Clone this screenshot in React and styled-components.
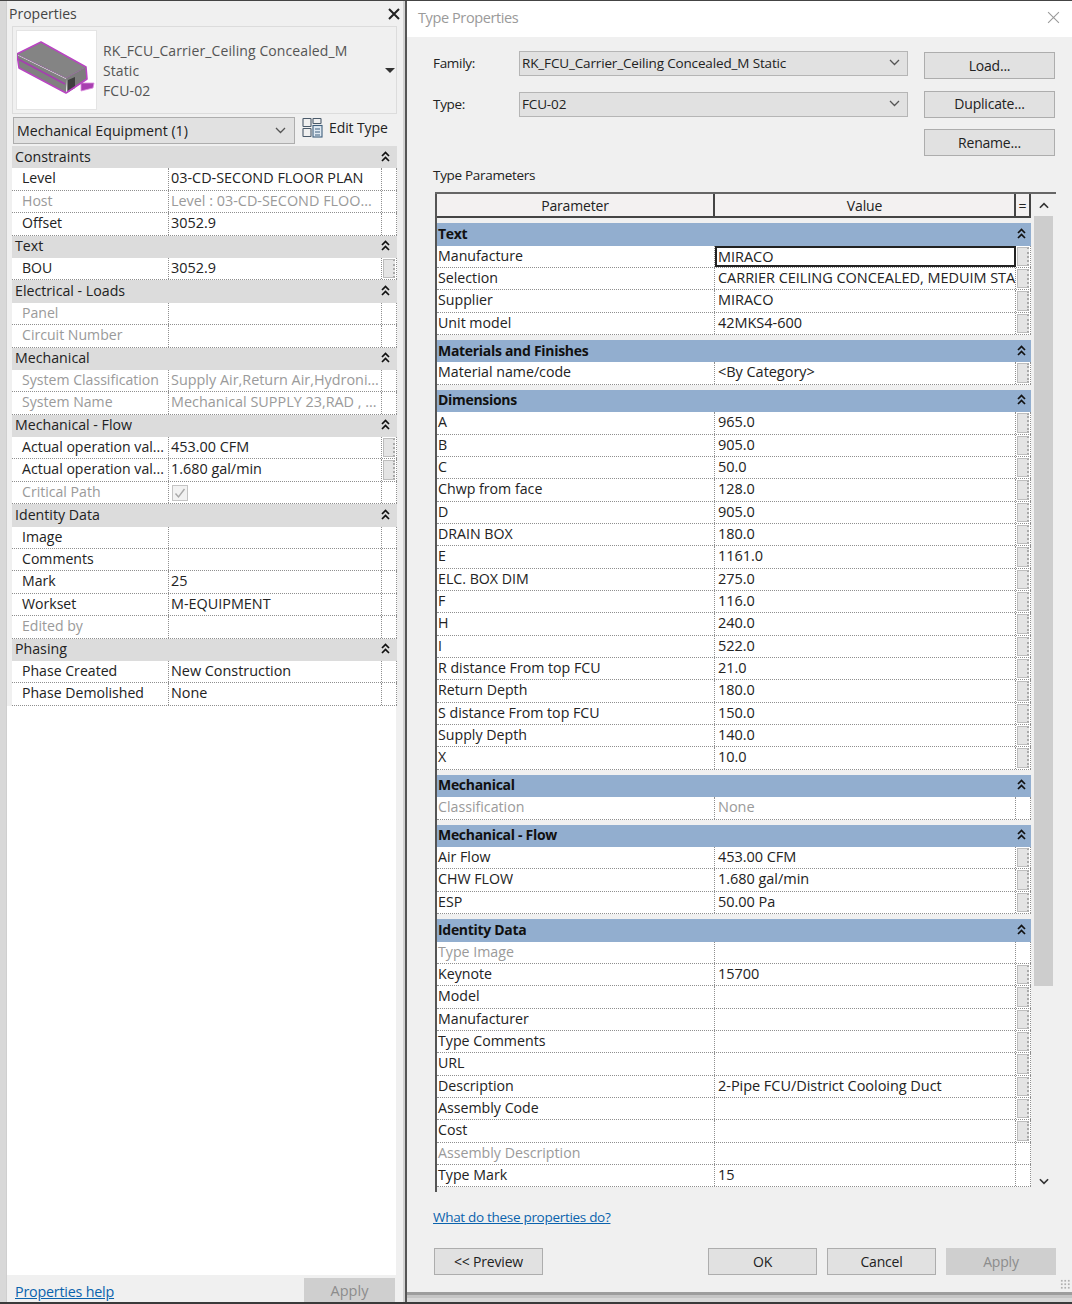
import React from "react";
import styled, { createGlobalStyle } from "styled-components";

const Global = createGlobalStyle`
  html, body { margin: 0; padding: 0; background: #6b6b6b; }
  * { box-sizing: border-box; }
  #root { width: 1072px; height: 1304px; overflow: hidden; }
`;

const Page = styled.div`
  width: 1072px; height: 1304px; display: flex; overflow: hidden;
  font-family: "Open Sans", "Noto Sans", sans-serif; font-size: 14px; color: #222;
  background: #d8d8d8; border-top: 1px solid #444; border-bottom: 2px solid #3a3a3a; position: relative;
`;
const LeftPanel = styled.section`
  width: 397px; margin-left: 6px; height: 100%; flex: none; display: flex; flex-direction: column;
  background: #f0f0f0; border-left: 1px solid #cfcfcf;
`;
const Seam = styled.div`
  width: 4px; flex: none; background: #d2d2d2; border-right: 2px solid #555;
`;
const TitleRow = styled.div`
  height: 25px; flex: none; display: flex; align-items: center; justify-content: space-between;
  padding: 0 3px 0 2px; font-size: 14px; color: #444;
`;
const TypeBox = styled.div`
  height: 88px; margin: 0 0 0 5px; flex: none; display: flex; align-items: center;
  width: 385px; border: 1px solid #dcdcdc; padding-left: 3px;
`;
const Thumb = styled.div`
  width: 81px; height: 80px; background: #fff; flex: none; border: 1px solid #e4e4e4;
  display: flex; align-items: center; justify-content: center;
`;
const TypeText = styled.div`
  flex: 1; padding: 2px 0 0 6px; line-height: 20px; color: #555; font-size: 14px; letter-spacing: 0.1px;
`;
const Caret = styled.div`
  width: 0; height: 0; border: 5px solid transparent; border-top: 5px solid #333; margin: 5px 1px 0 0;
`;
const SelectorRow = styled.div`
  display: flex; align-items: center; height: 32px; flex: none; padding: 0 0 0 6px;
`;
const CategorySelect = styled.div`
  width: 282px; height: 27px; background: #e1e1e1; border: 1px solid #adadad;
  display: flex; align-items: center; justify-content: space-between; padding: 0 8px 0 3px; font-size: 14.2px; color: #222;
`;
const EditType = styled.div`
  display: flex; align-items: center; gap: 6px; margin: -5px 0 0 7px; font-size: 14px; color: #222; letter-spacing: -0.1px;
`;
const EditLabel = styled.span`
  margin-top: -1px;
`;
const PropTable = styled.div`
  margin-left: 5px; width: 385px; background: #fff; flex: none;
`;
const PropSection = styled.div`
  height: 22.4px; background: #dcdcdc; display: flex; align-items: center; justify-content: space-between;
  padding: 0 7px 2px 3px; font-size: 14.2px; color: #222;
`;
const PropRow = styled.div`
  height: 22.4px; display: grid; grid-template-columns: 156px 213px 16px;
  border-bottom: 1px dotted #8f8f8f; background: #fff; font-size: 14px;
`;
const PropName = styled.div`
  padding-left: 10px; line-height: 20px; white-space: nowrap; overflow: hidden;
  color: ${p => (p.$dim ? "#9a9a9a" : "#222")}; font-size: 14.1px;
`;
const PropValue = styled.div`
  padding-left: 2px; line-height: 20px; white-space: nowrap; overflow: hidden; font-size: 14.4px;
  border-left: 1px dotted #8f8f8f; color: ${p => (p.$dim ? "#9a9a9a" : "#222")};
`;
const PropStub = styled.div`
  border-left: 1px dotted #8f8f8f; border-right: 1px dotted #8f8f8f; padding: 1px 1px;
`;
const StubFace = styled.div`
  height: 100%; background: #e4e4e4; border: 1px solid #bdbdbd; border-right: 2px dotted #a9a9a9;
`;
const Check = styled.div`
  width: 16px; height: 16px; margin: 3px 0 0 1px; border: 1px solid #c4c4c4; background: #f2f2f2;
  display: flex; align-items: center; justify-content: center;
`;
const FillWhite = styled.div`
  flex: 1; background: #fff; margin-right: 7px;
`;
const LeftFooter = styled.div`
  height: 27px; flex: none; display: flex; justify-content: space-between; align-items: flex-end;
  padding: 0 8px 0 8px; background: #f0f0f0;
`;
const HelpLink = styled.a`
  color: #0a63ad; text-decoration: underline; font-size: 14.3px; margin-bottom: 1px; letter-spacing: -0.2px;
`;
const DisabledButton = styled.div`
  width: 91px; height: 24px; background: #cfcfcf; color: #8c8c8c; display: flex; align-items: center;
  justify-content: center; font-size: 14.5px;
`;

const Dialog = styled.section`
  flex: 1; height: 1291px; background: #f0f0f0; display: flex; flex-direction: column;
  box-shadow: 0 3px 0 #9d9d9d, 0 6px 0 #c5c5c5;
`;
const DialogTitle = styled.div`
  height: 36px; background: #fff; flex: none; display: flex; align-items: center; justify-content: space-between;
  padding: 0 12px 3px 11px; color: #9a9a9a; font-size: 14.5px; letter-spacing: -0.4px;
`;
const DialogBody = styled.div`
  flex: 1; display: flex; flex-direction: column; padding: 13px 16px 0 26px; position: relative;
`;
const TopArea = styled.div`
  display: grid; grid-template-columns: 86px 389px 131px; height: 106px; flex: none;
`;
const FieldCol = styled.div`
  grid-column: span 2; display: flex; flex-direction: column; gap: 16px; padding-top: 1px;
`;
const Field = styled.div`
  display: flex; align-items: center; height: 25px;
`;
const FieldLabel = styled.div`
  width: 86px; font-size: 13.5px; color: #222; letter-spacing: -0.3px; padding-bottom: 2px;
`;
const DialogSelect = styled.div`
  width: 389px; height: 25px; background: #e1e1e1; border: 1px solid #b5b5b5; display: flex; align-items: center;
  justify-content: space-between; padding: 0 7px 2px 2px; font-size: 13.5px; letter-spacing: -0.15px; color: #222;
`;
const ButtonCol = styled.div`
  width: 131px; margin-left: 16px; display: flex; flex-direction: column; gap: 11.5px; padding-top: 2px;
`;
const DlgButton = styled.div`
  width: ${p => p.$w || 131}px; height: 27px; background: ${p => (p.$off ? "#cfcfcf" : "#e1e1e1")};
  border: 1px solid ${p => (p.$off ? "#cfcfcf" : "#adadad")}; color: ${p => (p.$off ? "#8c8c8c" : "#222")};
  display: flex; align-items: center; justify-content: center; font-size: 14px; letter-spacing: -0.2px; padding-bottom: 1px;
`;
const ParamLabel = styled.div`
  height: 36px; flex: none; padding-top: 10px; font-size: 13.5px; letter-spacing: -0.3px; color: #222; line-height: 18px;
`;
const TableWrap = styled.div`
  display: flex; margin-left: 2px; height: 1000px; flex: none; border-top: 2px solid #666;
`;
const GridArea = styled.div`
  width: 596px; flex: none; border-left: 2px solid #555; overflow: hidden;
`;
const HeaderRow = styled.div`
  display: grid; grid-template-columns: 278px 301px 15px; height: 24px; background: #f3f1f1; border-bottom: 2px solid #444;
`;
const HeaderCell = styled.div`
  display: flex; align-items: center; justify-content: center; font-size: 14px; letter-spacing: -0.15px;
  border-right: 2px solid #444; color: #222;
`;
const TypeSection = styled.div`
  height: 22.5px; margin-top: 5px; background: #92aecf; display: flex; align-items: center; justify-content: space-between;
  padding: 0 5px 2px 1px; font-weight: 700; font-size: 14px; letter-spacing: -0.3px; color: #111;
`;
const TypeRow = styled.div`
  display: grid; grid-template-columns: 278px 301px 15px; height: 22.35px; background: #fff;
  border-bottom: 1px dotted #8f8f8f;
`;
const TypeName = styled.div`
  padding-left: 1px; line-height: 20px; border-right: 1px dotted #8f8f8f; white-space: nowrap; overflow: hidden;
  font-size: 14.2px; color: ${p => (p.$dim ? "#9a9a9a" : "#222")};
`;
const TypeValue = styled.div`
  padding-left: 3px; line-height: 20px; white-space: nowrap; overflow: hidden; font-size: 14.5px; letter-spacing: -0.04px;
  color: ${p => (p.$dim ? "#9a9a9a" : "#222")};
  border-right: 1px dotted #8f8f8f;
  ${p => p.$active && "border: 2px solid #222; padding-left: 1px; line-height: 18px;"}
`;
const TypeStub = styled.div`
  padding: 1px; border-right: 1px dotted #8f8f8f;
`;
const Scrollbar = styled.div`
  width: 19px; margin-left: 3px; display: flex; flex-direction: column; align-items: center; background: #f0f0f0; flex: none;
`;
const ScrollArrow = styled.div`
  height: 22px; flex: none; display: flex; align-items: center; justify-content: center; width: 100%;
`;
const Thumbbar = styled.div`
  width: 19px; height: 770px; background: #cdcdcd; flex: none;
`;
const Spacer = styled.div`
  flex: 1;
`;
const LinkRow = styled.div`
  height: 56px; flex: none; padding-top: 15px;
`;
const DlgLink = styled.a`
  color: #0a63ad; text-decoration: underline; font-size: 13.5px; letter-spacing: -0.3px;
`;
const Actions = styled.div`
  display: flex; align-items: center; height: 27px; flex: none; padding-left: 1px;
`;
const ActionsRight = styled.div`
  margin-left: auto; display: flex; gap: 10px;
`;
const Grip = styled.div`
  position: absolute; right: 2px; bottom: 3px; width: 10px; height: 10px;
  background-image: radial-gradient(#b0b0b0 1px, transparent 1.2px); background-size: 3.5px 3.5px;
`;

const DoubleUp = () => (
  <svg width="9" height="11" viewBox="0 0 9 11" fill="none" stroke="#111" strokeWidth="1.7">
    <path d="M1 5 4.5 1.5 8 5" />
    <path d="M1 10 4.5 6.5 8 10" />
  </svg>
);
const Chevron = ({ up, color = "#555", w = 11, sw = 1.3 }) => (
  <svg width={w} height="7" viewBox="0 0 11 7" fill="none" stroke={color} strokeWidth={sw}>
    <path d={up ? "M1 6 5.5 1.5 10 6" : "M1 1 5.5 5.5 10 1"} />
  </svg>
);
const CloseX = ({ size = 12, color = "#222", sw = 2 }) => (
  <svg width={size} height={size} viewBox="0 0 12 12" stroke={color} strokeWidth={sw} fill="none">
    <path d="M1 1 11 11M11 1 1 11" />
  </svg>
);
const FcuIcon = () => (
  <svg width="79" height="78" viewBox="3 1 79 78">
    <path d="M67 53 80 53 79 58 67 61Z" fill="#a83fb0" stroke="#dc8fe0" strokeWidth="0.8" />
    <path d="M52 48 72 37 73 49 53 63Z" fill="#7c7c7c" />
    <path d="M54 50 61 47 61 58 54 62Z" fill="#3f3f3f" />
    <path d="M3 25 52 49 52 63 5 38Z" fill="#808080" />
    <path d="M3 24 27 12 72 37 52 48Z" fill="#848484" />
    <path d="M4 29 51 54" fill="none" stroke="#a53fb0" strokeWidth="1.8" />
    <path d="M3 24 27 12 72 37 73 49 52 63 5 38Z" fill="none" stroke="#b945c2" strokeWidth="1.6" strokeLinejoin="round" />
    <path d="M3 24 52 48 72 37" fill="none" stroke="#8f6a96" strokeWidth="1" />
  </svg>
);
const EditIcon = () => (
  <svg width="21" height="21" viewBox="0 0 21 21" fill="none" stroke="#4a5a6a" strokeWidth="1.1">
    <rect x="1" y="1.5" width="8" height="8" rx="0.5" />
    <rect x="11" y="1.5" width="8" height="5" rx="0.5" />
    <rect x="1" y="11.5" width="8" height="8" rx="0.5" />
    <rect x="11" y="8.5" width="9" height="11.5" fill="#dfe9f2" stroke="#3f5f7d" />
    <path d="M13 12h5M13 15h5M13 18h5" stroke="#3f5f7d" />
  </svg>
);
const CheckMark = () => (
  <svg width="12" height="12" viewBox="0 0 12 12" fill="none" stroke="#a8a8a8" strokeWidth="1.4">
    <path d="M1.5 6.5 4.5 10 10.5 2" />
  </svg>
);

const S = (name) => ({ s: name });
const leftRows = [
  S("Constraints"),
  { n: "Level", v: "03-CD-SECOND FLOOR PLAN" },
  { n: "Host", v: "Level : 03-CD-SECOND FLOO...", dim: true },
  { n: "Offset", v: "3052.9" },
  S("Text"),
  { n: "BOU", v: "3052.9", stub: true },
  S("Electrical - Loads"),
  { n: "Panel", v: "", dim: true },
  { n: "Circuit Number", v: "", dim: true },
  S("Mechanical"),
  { n: "System Classification", v: "Supply Air,Return Air,Hydroni...", dim: true },
  { n: "System Name", v: "Mechanical SUPPLY 23,RAD , ...", dim: true },
  S("Mechanical - Flow"),
  { n: "Actual operation val...", v: "453.00 CFM", stub: true },
  { n: "Actual operation val...", v: "1.680 gal/min", stub: true },
  { n: "Critical Path", check: true, dim: true },
  S("Identity Data"),
  { n: "Image", v: "" },
  { n: "Comments", v: "" },
  { n: "Mark", v: "25" },
  { n: "Workset", v: "M-EQUIPMENT" },
  { n: "Edited by", v: "", dim: true },
  S("Phasing"),
  { n: "Phase Created", v: "New Construction" },
  { n: "Phase Demolished", v: "None" },
];

const R = (n, v = "", stub = true, dim = false) => ({ n, v, stub, dim });
const typeRows = [
  S("Text"),
  { n: "Manufacture", v: "MIRACO", stub: true, active: true },
  R("Selection", "CARRIER CEILING CONCEALED, MEDUIM STA"),
  R("Supplier", "MIRACO"),
  R("Unit model", "42MKS4-600"),
  S("Materials and Finishes"),
  R("Material name/code", "<By Category>"),
  S("Dimensions"),
  R("A", "965.0"), R("B", "905.0"), R("C", "50.0"), R("Chwp from face", "128.0"), R("D", "905.0"),
  R("DRAIN BOX", "180.0"), R("E", "1161.0"), R("ELC. BOX DIM", "275.0"), R("F", "116.0"), R("H", "240.0"),
  R("I", "522.0"), R("R distance From top FCU", "21.0"), R("Return Depth", "180.0"),
  R("S distance From top FCU", "150.0"), R("Supply Depth", "140.0"), R("X", "10.0"),
  S("Mechanical"),
  R("Classification", "None", false, true),
  S("Mechanical - Flow"),
  R("Air Flow", "453.00 CFM"), R("CHW FLOW", "1.680 gal/min"), R("ESP", "50.00 Pa"),
  S("Identity Data"),
  R("Type Image", "", false, true),
  R("Keynote", "15700"), R("Model"), R("Manufacturer"), R("Type Comments"), R("URL"),
  R("Description", "2-Pipe FCU/District Cooloing Duct"), R("Assembly Code"), R("Cost"),
  R("Assembly Description", "", false, true),
  R("Type Mark", "15", false),
];

export default function App() {
  return (
    <Page>
      <Global />
      <LeftPanel>
        <TitleRow>
          <span>Properties</span>
          <CloseX />
        </TitleRow>
        <TypeBox>
          <Thumb><FcuIcon /></Thumb>
          <TypeText>
            <div>RK_FCU_Carrier_Ceiling Concealed_M</div>
            <div>Static</div>
            <div>FCU-02</div>
          </TypeText>
          <Caret />
        </TypeBox>
        <SelectorRow>
          <CategorySelect>
            <span>Mechanical Equipment (1)</span>
            <Chevron />
          </CategorySelect>
          <EditType><EditIcon /><EditLabel>Edit Type</EditLabel></EditType>
        </SelectorRow>
        <PropTable>
          {leftRows.map((r, i) =>
            r.s ? (
              <PropSection key={i}><span>{r.s}</span><DoubleUp /></PropSection>
            ) : (
              <PropRow key={i}>
                <PropName $dim={r.dim}>{r.n}</PropName>
                <PropValue $dim={r.dim}>
                  {r.check ? <Check><CheckMark /></Check> : r.v}
                </PropValue>
                <PropStub>{r.stub && <StubFace />}</PropStub>
              </PropRow>
            )
          )}
        </PropTable>
        <FillWhite />
        <LeftFooter>
          <HelpLink>Properties help</HelpLink>
          <DisabledButton>Apply</DisabledButton>
        </LeftFooter>
      </LeftPanel>
      <Seam />
      <Dialog>
        <DialogTitle>
          <span>Type Properties</span>
          <CloseX size={13} color="#9a9a9a" sw={1} />
        </DialogTitle>
        <DialogBody>
          <TopArea>
            <FieldCol>
              <Field>
                <FieldLabel>Family:</FieldLabel>
                <DialogSelect><span>RK_FCU_Carrier_Ceiling Concealed_M Static</span><Chevron /></DialogSelect>
              </Field>
              <Field>
                <FieldLabel>Type:</FieldLabel>
                <DialogSelect><span>FCU-02</span><Chevron /></DialogSelect>
              </Field>
            </FieldCol>
            <ButtonCol>
              <DlgButton>Load...</DlgButton>
              <DlgButton>Duplicate...</DlgButton>
              <DlgButton>Rename...</DlgButton>
            </ButtonCol>
          </TopArea>
          <ParamLabel>Type Parameters</ParamLabel>
          <TableWrap>
            <GridArea>
              <HeaderRow>
                <HeaderCell>Parameter</HeaderCell>
                <HeaderCell>Value</HeaderCell>
                <HeaderCell>=</HeaderCell>
              </HeaderRow>
              {typeRows.map((r, i) =>
                r.s ? (
                  <TypeSection key={i}><span>{r.s}</span><DoubleUp /></TypeSection>
                ) : (
                  <TypeRow key={i}>
                    <TypeName $dim={r.dim}>{r.n}</TypeName>
                    <TypeValue $dim={r.dim} $active={r.active}>{r.v}</TypeValue>
                    <TypeStub>{r.stub && <StubFace />}</TypeStub>
                  </TypeRow>
                )
              )}
            </GridArea>
            <Scrollbar>
              <ScrollArrow><Chevron up color="#333" w={10} sw={1.8} /></ScrollArrow>
              <Thumbbar />
              <Spacer />
              <ScrollArrow><Chevron color="#333" w={10} sw={1.8} /></ScrollArrow>
            </Scrollbar>
          </TableWrap>
          <LinkRow><DlgLink>What do these properties do?</DlgLink></LinkRow>
          <Actions>
            <DlgButton $w={109}>{"<< Preview"}</DlgButton>
            <ActionsRight>
              <DlgButton $w={109}>OK</DlgButton>
              <DlgButton $w={109}>Cancel</DlgButton>
              <DlgButton $w={110} $off>Apply</DlgButton>
            </ActionsRight>
          </Actions>
          <Grip />
        </DialogBody>
      </Dialog>
    </Page>
  );
}
